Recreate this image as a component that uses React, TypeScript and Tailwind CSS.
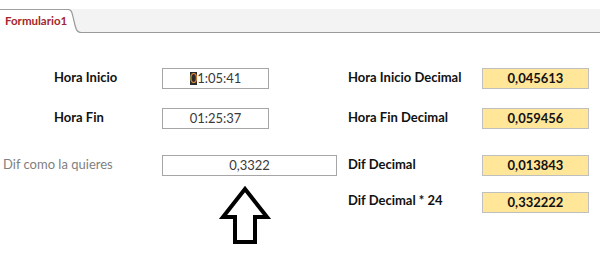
import React from "react";

const font = { fontFamily: "Lato, 'Open Sans', sans-serif" };

function Box({ w, children, yellow, bold }: { w: string; children: React.ReactNode; yellow?: boolean; bold?: boolean }) {
  return (
    <div
      className={`${w} h-[21px] flex items-center justify-center border ${
        yellow ? "bg-[#ffe699] border-[#bfbfbf] text-[#111]" : "bg-white border-[#a6a6a6] text-[#3a3a3a]"
      } ${bold ? "font-bold" : ""} text-[13px] leading-none`}
    >
      {children}
    </div>
  );
}

export default function App() {
  return (
    <div className="w-[600px] h-[278px] bg-white overflow-hidden" style={font}>
      <div className="pt-[9px] h-[33px]">
        <div className="flex h-[24px]">
          <div className="w-[66px] border-t border-[#a0a0a0] bg-white pl-[5px] pt-[5px] text-[11.5px] font-bold text-[#a4262c] leading-none">
            Formulario1
          </div>
          <svg width="15" height="24" viewBox="0 0 15 24" className="block">
            <path d="M0 0 L2 0 C6 0 6 4 8 12 C10 21 11 23 15 23 L15 0 Z" fill="#f3f3f3" />
            <path d="M0 0.5 L2 0.5 C6 0.5 6 4 8 12 C10 21 11 23.5 15 23.5" fill="none" stroke="#9a9a9a" strokeWidth="1.2" />
          </svg>
          <div className="flex-1 bg-[#f3f3f3] border-b border-[#9a9a9a]" />
        </div>
      </div>

      <div className="pt-[35px]">
        <div className="flex items-center h-[21px]">
          <div className="w-[162px] pl-[54px] font-bold text-[13px] text-[#111] -mt-[2px]">Hora Inicio</div>
          <Box w="w-[107px]">
            <span className="bg-[#2a2a2a] text-[#d98c3a]">0</span>1:05:41
          </Box>
          <div className="w-[79px]" />
          <div className="w-[134px] font-bold text-[13px] text-[#111] -mt-[2px]">Hora Inicio Decimal</div>
          <Box w="w-[107px]" yellow bold>0,045613</Box>
        </div>

        <div className="flex items-center h-[21px] mt-[19px]">
          <div className="w-[162px] pl-[54px] font-bold text-[13px] text-[#111] -mt-[2px]">Hora Fin</div>
          <Box w="w-[107px]">01:25:37</Box>
          <div className="w-[79px]" />
          <div className="w-[134px] font-bold text-[13px] text-[#111] -mt-[2px]">Hora Fin Decimal</div>
          <Box w="w-[107px]" yellow bold>0,059456</Box>
        </div>

        <div className="flex items-center h-[21px] mt-[26px]">
          <div className="w-[162px] pl-[3px] text-[13px] text-[#7f7f7f] -mt-[2px]">Dif como la quieres</div>
          <Box w="w-[175px]">0,3322</Box>
          <div className="w-[11px]" />
          <div className="w-[134px] font-bold text-[13px] text-[#111] -mt-[2px]">Dif Decimal</div>
          <Box w="w-[107px]" yellow bold>0,013843</Box>
        </div>

        <div className="flex items-start mt-[16px]">
          <div className="w-[348px] h-[60px]">
            <svg width="56" height="64" viewBox="0 0 56 64" className="block ml-[217px] -mt-[7px]">
              <path
                d="M28 4 L50 32 L38 32 L38 57 L18 57 L18 32 L6 32 Z"
                fill="none"
                stroke="#000"
                strokeWidth="4"
                strokeLinejoin="miter"
              />
            </svg>
          </div>
          <div className="w-[134px] h-[21px] flex items-center font-bold text-[13px] text-[#111] -mt-[2px]">Dif Decimal * 24</div>
          <Box w="w-[107px]" yellow bold>0,332222</Box>
        </div>
      </div>
    </div>
  );
}
